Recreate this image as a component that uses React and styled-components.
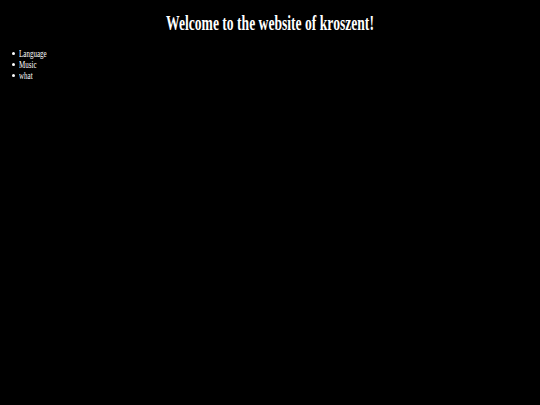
import React from "react";
import styled, { createGlobalStyle } from "styled-components";

const GlobalStyle = createGlobalStyle`
  html, body {
    margin: 0;
    background: #000;
  }
  body {
    color: #fff;
    font-family: "Liberation Serif", "Times New Roman", serif;
  }
`;

const Page = styled.div`
  min-height: 405px;
  background: #000;
  padding: 8px 8px;
  box-sizing: border-box;
`;

const Title = styled.h1`
  margin: 3px 0 13px;
  text-align: center;
  font-size: 20px;
  line-height: 24px;
  font-weight: bold;
  transform: scaleX(0.68);
`;

const Menu = styled.ul`
  margin: 0;
  padding: 0 0 0 4px;
  list-style: none;
  font-size: 10px;
  line-height: 11px;
`;

const Item = styled.li`
  display: flex;
  align-items: center;
  gap: 4px;
  height: 11px;
`;

const Bullet = styled.span`
  width: 3px;
  height: 3px;
  border-radius: 50%;
  background: #fff;
  flex: none;
`;

const Label = styled.span`
  display: inline-block;
  transform: scaleX(0.7);
  transform-origin: left center;
  white-space: nowrap;
`;

const items = ["Language", "Music", "what"];

export default function App() {
  return (
    <Page>
      <GlobalStyle />
      <Title>Welcome to the website of kroszent!</Title>
      <Menu>
        {items.map((name) => (
          <Item key={name}>
            <Bullet />
            <Label>{name}</Label>
          </Item>
        ))}
      </Menu>
    </Page>
  );
}
